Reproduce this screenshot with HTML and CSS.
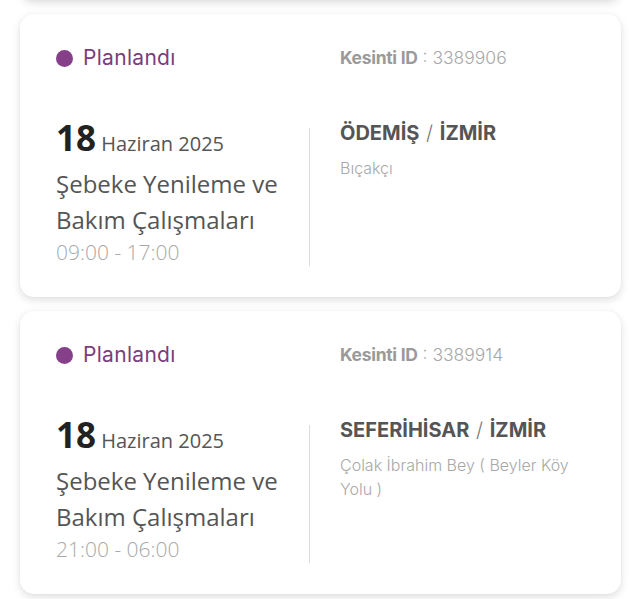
FILE: index.html
```html
<!DOCTYPE html>
<html lang="tr">
<head>
<meta charset="utf-8">
<link rel="stylesheet" href="styles.css">
</head>
<body>
<div class="list">
  <div class="card stub"></div>

  <div class="card">
    <div class="row head">
      <div class="status"><span class="dot"></span>Planlandı</div>
      <div></div>
      <div class="cell-r kid"><b>Kesinti ID</b> : 3389906</div>
    </div>
    <div class="row body">
      <div class="left">
        <div class="date"><span class="day">18</span> Haziran 2025</div>
        <div class="title">Şebeke Yenileme ve Bakım Çalışmaları</div>
        <div class="time">09:00 - 17:00</div>
      </div>
      <div class="divider"></div>
      <div class="cell-r">
        <div class="place">ÖDEMİŞ <span class="sl">/</span> İZMİR</div>
        <div class="addr">Bıçakçı</div>
      </div>
    </div>
  </div>

  <div class="card">
    <div class="row head">
      <div class="status"><span class="dot"></span>Planlandı</div>
      <div></div>
      <div class="cell-r kid"><b>Kesinti ID</b> : 3389914</div>
    </div>
    <div class="row body">
      <div class="left">
        <div class="date"><span class="day">18</span> Haziran 2025</div>
        <div class="title">Şebeke Yenileme ve Bakım Çalışmaları</div>
        <div class="time">21:00 - 06:00</div>
      </div>
      <div class="divider"></div>
      <div class="cell-r">
        <div class="place">SEFERİHİSAR <span class="sl">/</span> İZMİR</div>
        <div class="addr">Çolak İbrahim Bey ( Beyler Köy Yolu )</div>
      </div>
    </div>
  </div>
</div>
</body>
</html>
```

FILE: styles.css
```css
* { box-sizing: border-box; }
html, body { margin: 0; background: #fff; }
body { font-family: "Inter", "Liberation Sans", sans-serif; }

.list {
  display: flex;
  flex-direction: column;
  gap: 14px;
  padding: 0 8px 20px 20px;
}

.card {
  background: #fff;
  border-radius: 14px;
  box-shadow: 0 3px 8px rgba(0, 0, 0, 0.13), 0 0 2px rgba(0, 0, 0, 0.05);
  padding: 33px 36px 31px 36px;
}
.card.stub {
  height: 40px;
  margin-top: -40px;
  padding: 0;
}

.row {
  display: grid;
  grid-template-columns: 253px 1px 1fr;
}
.head { height: 22px; align-items: center; }
.body { margin-top: 51px; align-items: start; }

.status {
  display: flex;
  align-items: center;
  color: #7a3d7d;
  font-size: 21px;
  line-height: 22px;
  letter-spacing: 0.3px;
}
.dot {
  width: 17px;
  height: 17px;
  border-radius: 50%;
  background: #86408a;
  margin-right: 10px;
  flex: none;
}

.cell-r { padding-left: 30px; }

.kid {
  color: #a8a8a8;
  font-size: 17.5px;
  font-weight: 300;
  line-height: 22px;
}
.kid b { font-weight: 700; color: #9a9a9a; letter-spacing: -0.3px; }

.divider {
  align-self: stretch;
  margin-top: 8px;
  background: #dcdcdc;
}

.left {
  font-family: "Open Sans", "Noto Sans", sans-serif;
}
.date { color: #555; font-size: 20px; line-height: 36px; }
.day { color: #222; font-size: 35px; font-weight: 700; }
.title { color: #555; font-size: 24px; line-height: 36px; margin-top: 4px; }
.time { color: #a8a8a8; font-size: 21px; font-weight: 300; line-height: 28px; }

.place {
  color: #555;
  font-size: 20px;
  font-weight: 700;
  line-height: 26px;
}
.place .sl { font-weight: 300; color: #777; margin: 0 2px; }
.addr {
  color: #a8a8a8;
  font-size: 16px;
  font-weight: 300;
  line-height: 24px;
  margin-top: 10px;
}
```
